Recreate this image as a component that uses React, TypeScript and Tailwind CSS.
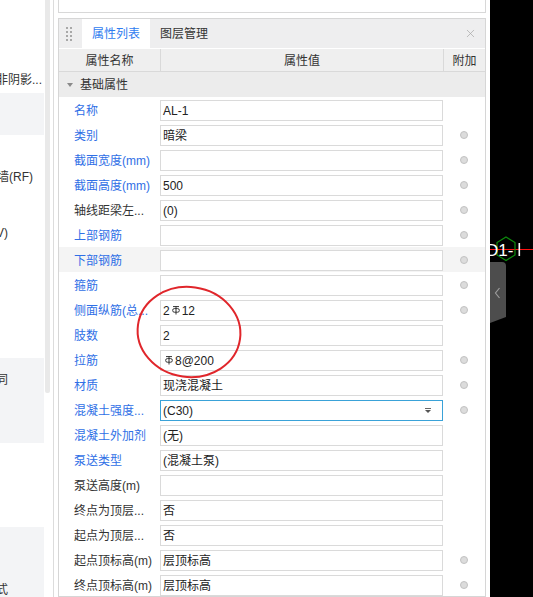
import { X } from "lucide-react"

type Row = {
    label: string
    value: string
    blue: boolean
    dot: boolean
    active?: boolean
    select?: boolean
}

// "%" in a value stands for the HRB400 rebar mark
const rows: Row[] = [
    { label: "名称", value: "AL-1", blue: true, dot: false },
    { label: "类别", value: "暗梁", blue: true, dot: true },
    { label: "截面宽度(mm)", value: "", blue: true, dot: true },
    { label: "截面高度(mm)", value: "500", blue: true, dot: true },
    { label: "轴线距梁左...", value: "(0)", blue: false, dot: true },
    { label: "上部钢筋", value: "", blue: true, dot: true },
    { label: "下部钢筋", value: "", blue: true, dot: true, active: true },
    { label: "箍筋", value: "", blue: true, dot: true },
    { label: "侧面纵筋(总...", value: "2%12", blue: true, dot: true },
    { label: "肢数", value: "2", blue: true, dot: false },
    { label: "拉筋", value: "%8@200", blue: true, dot: true },
    { label: "材质", value: "现浇混凝土", blue: true, dot: true },
    { label: "混凝土强度...", value: "(C30)", blue: true, dot: true, select: true },
    { label: "混凝土外加剂", value: "(无)", blue: true, dot: false },
    { label: "泵送类型", value: "(混凝土泵)", blue: true, dot: false },
    { label: "泵送高度(m)", value: "", blue: false, dot: false },
    { label: "终点为顶层...", value: "否", blue: false, dot: false },
    { label: "起点为顶层...", value: "否", blue: false, dot: false },
    { label: "起点顶标高(m)", value: "层顶标高", blue: false, dot: true },
    { label: "终点顶标高(m)", value: "层顶标高", blue: false, dot: true },
]

function RebarMark() {
    return (
        <svg width="8" height="9" viewBox="0 0 8 9" className="inline-block self-start mt-[4px] mx-[2px]">
            <line x1="1" y1="0.6" x2="7" y2="0.6" stroke="#333" strokeWidth="1" />
            <line x1="4" y1="0" x2="4" y2="8.5" stroke="#333" strokeWidth="1" />
            <rect x="0.7" y="2.6" width="6.6" height="3.6" rx="1.6" fill="none" stroke="#333" strokeWidth="1" />
        </svg>
    )
}

function Value({ text }: { text: string }) {
    const parts = text.split("%")
    return (
        <>
            {parts.map((p, i) => (
                <span key={i} className="flex">
                    {i > 0 && <RebarMark />}
                    {p}
                </span>
            ))}
        </>
    )
}

function Clip({ text, shift }: { text: string; shift: string }) {
    return (
        <div className="h-[25px] leading-[25px] whitespace-nowrap overflow-hidden">
            <span className={"inline-block " + shift}>{text}</span>
        </div>
    )
}

function LeftStrip() {
    return (
        <div className="w-[44px] shrink-0 flex flex-col text-[12px] text-[#333]">
            <div className="h-[68px] shrink-0" />
            <Clip text="非阴影..." shift="-ml-[4px]" />
            <div className="h-[42px] shrink-0 bg-[#f3f4f6]" />
            <div className="h-[223px] shrink-0 pt-[30px]">
                <Clip text="墙(RF)" shift="-ml-[3px]" />
                <div className="h-[31px]" />
                <Clip text="(V)" shift="-ml-[8px]" />
            </div>
            <div className="h-[85px] shrink-0 bg-[#f3f4f6] pt-[10px]">
                <Clip text="同" shift="-ml-[4px]" />
            </div>
            <div className="h-[84px] shrink-0" />
            <div className="h-[70px] shrink-0 bg-[#f3f4f6] pt-[51px] overflow-hidden">
                <Clip text="式" shift="-ml-[4px]" />
            </div>
        </div>
    )
}

function TabBar() {
    return (
        <div className="h-[29px] shrink-0 bg-[#eeeeef] flex items-stretch text-[12px]">
            <div className="ml-[7px] self-center grid grid-cols-2 gap-[2px]">
                {Array.from({ length: 8 }).map((_, i) => (
                    <div key={i} className="w-[2px] h-[2px] bg-[#a8a8a8]" />
                ))}
            </div>
            <div className="ml-[10px] w-[68px] bg-white text-[#2f7cf0] flex items-center justify-center">
                属性列表
            </div>
            <div className="px-[10px] text-[#333] flex items-center">图层管理</div>
            <div className="ml-auto mr-[8px] flex items-center text-[#a6a6a6]">
                <X size={13} strokeWidth={1.3} />
            </div>
        </div>
    )
}

function PropertyRow({ row }: { row: Row }) {
    return (
        <div className={"h-[25px] shrink-0 flex " + (row.active ? "bg-[#f4f4f4]" : "bg-white")}>
            <div
                className={
                    "w-[101px] shrink-0 pl-[15px] pt-[3px] leading-[22px] whitespace-nowrap overflow-hidden " +
                    (row.blue ? "text-[#2f6fe6]" : "text-[#333]")
                }
            >
                {row.label}
            </div>
            <div
                className={
                    "w-[283px] shrink-0 h-[21px] mt-[3px] bg-white border pl-[2px] flex items-center text-[#222] " +
                    (row.select ? "border-[#3aa2d8]" : "border-[#dadada]")
                }
            >
                <Value text={row.value} />
                {row.select && (
                    <div className="ml-auto mr-[11px] flex flex-col items-center">
                        <div className="w-[6px] h-px bg-[#666]" />
                        <div className="w-0 h-0 mt-px border-l-[3px] border-r-[3px] border-t-[3px] border-l-transparent border-r-transparent border-t-[#555]" />
                    </div>
                )}
            </div>
            <div className="flex-1 flex items-center justify-center">
                {row.dot && <div className="w-[8px] h-[8px] rounded-full bg-[#dcdcdc] border border-[#c2c2c2]" />}
            </div>
        </div>
    )
}

function PropertyPanel() {
    return (
        <div className="w-[428px] shrink-0 flex flex-col text-[12px]">
            <div className="h-[13px] shrink-0 bg-white border-x border-b border-[#d8d8d8]" />
            <div className="h-[5px] shrink-0" />
            <div className="flex-1 flex flex-col border border-[#d6d6d6] overflow-hidden">
                <TabBar />
                <div className="h-[24px] shrink-0 flex bg-[#efefef] border-t border-t-white border-b border-b-[#d9d9d9] text-[#333]">
                    <div className="w-[101px] shrink-0 pt-px flex items-center justify-center">属性名称</div>
                    <div className="w-[283px] shrink-0 pt-px border-l border-[#d9d9d9] flex items-center justify-center">
                        属性值
                    </div>
                    <div className="flex-1 pt-px border-l border-[#d9d9d9] flex items-center justify-center">附加</div>
                </div>
                <div className="h-[25px] shrink-0 pt-px bg-[#ececec] flex items-center text-[#333]">
                    <div className="ml-[8px] w-0 h-0 border-l-[3px] border-r-[3px] border-t-[4px] border-l-transparent border-r-transparent border-t-[#8a8a8a]" />
                    <span className="ml-[7px]">基础属性</span>
                </div>
                {rows.map((r) => (
                    <PropertyRow key={r.label} row={r} />
                ))}
            </div>
        </div>
    )
}

function Canvas() {
    return (
        <div className="relative w-[43px] shrink-0 bg-black overflow-hidden">
            <svg width="43" height="597" className="absolute left-0 top-0">
                <line x1="0" y1="249.5" x2="43" y2="249.5" stroke="#ff1010" strokeWidth="1" />
                <polygon
                    points="16,237 25,242.5 25,255 16,260.5 7,255 7,242.5"
                    fill="none"
                    stroke="#0c8c0c"
                    strokeWidth="1.2"
                />
                <text x="-4" y="255.5" fill="#fff" fontSize="17" fontFamily="Liberation Sans, sans-serif">
                    D1-
                </text>
                <rect x="28.5" y="243" width="1.6" height="13" fill="#fff" />
            </svg>
            <button className="absolute left-0 top-[262px] w-[16px] h-[61px]">
                <svg width="16" height="61" viewBox="0 0 16 61">
                    <path d="M0 0 H12 Q16 0 16 4 V55 L0 61 Z" fill="#4d4d4d" />
                    <path d="M9.5 26 L5.5 31 L9.5 36" fill="none" stroke="#9c9c9c" strokeWidth="1.2" />
                </svg>
            </button>
        </div>
    )
}

export default function App() {
    return (
        <div className="relative w-[533px] h-[597px] overflow-hidden flex bg-white font-['Liberation_Sans','Noto_Sans_CJK_SC',sans-serif]">
            <LeftStrip />
            <div className="w-[9px] shrink-0">
                <div className="ml-[1px] w-[5px] h-[393px] bg-[#e9e9e9] rounded-b-[2px]" />
            </div>
            <div className="w-px shrink-0 bg-[#dcdcdc]" />
            <div className="w-[4px] shrink-0" />
            <PropertyPanel />
            <div className="w-[4px] shrink-0" />
            <Canvas />
            {/* red hand-drawn mark over the rebar rows */}
            <svg width="112" height="100" className="absolute left-[133px] top-[283px] pointer-events-none">
                <ellipse
                    cx="56"
                    cy="49"
                    rx="51.5"
                    ry="45"
                    transform="rotate(8 56 49)"
                    fill="none"
                    stroke="#e0262b"
                    strokeWidth="2"
                />
            </svg>
        </div>
    )
}
